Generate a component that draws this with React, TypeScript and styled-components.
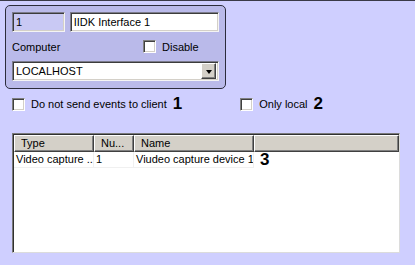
import React from 'react';
import styled, { createGlobalStyle } from 'styled-components';

const GlobalStyle = createGlobalStyle`
  html, body {
    margin: 0;
    padding: 0;
    background: #cfcfff;
  }
  body {
    font-family: "Liberation Sans", Arial, sans-serif;
    font-size: 11px;
    color: #000;
  }
`;

const Window = styled.div`
  width: 415px;
  height: 265px;
  box-sizing: border-box;
  background: #cfcfff;
  border-top: 1px solid #3a3a48;
  padding: 4px 0 0 5px;
  display: flex;
  flex-direction: column;
`;

const Panel = styled.div`
  width: 221px;
  height: 84px;
  box-sizing: border-box;
  background: #babaea;
  border: 1px solid #2c2c3c;
  border-radius: 5px;
  padding: 6px 6px 0 6px;
  display: flex;
  flex-direction: column;
`;

const Row = styled.div<{ $h?: number }>`
  display: flex;
  align-items: center;
  gap: 5px;
  height: ${(p) => (p.$h ? `${p.$h}px` : 'auto')};
`;

const Field = styled.div<{ $w: number; $bg?: string }>`
  width: ${(p) => p.$w}px;
  height: 20px;
  box-sizing: border-box;
  background: ${(p) => p.$bg || '#fff'};
  border: 1px solid;
  border-color: #7c7c8c #f4f4f4 #f4f4f4 #7c7c8c;
  box-shadow: inset 1px 1px 0 #3c3c3c, inset -1px -1px 0 #d4d0c8;
  padding: 0 0 0 3px;
  display: flex;
  align-items: center;
  white-space: nowrap;
  overflow: hidden;
`;

const Label = styled.span`
  flex: 1;
`;

const CheckWrap = styled.label<{ $w?: number }>`
  display: flex;
  align-items: center;
  gap: 6px;
  width: ${(p) => (p.$w ? `${p.$w}px` : 'auto')};
`;

const Box = styled.span`
  width: 13px;
  height: 13px;
  box-sizing: border-box;
  background: #fff;
  border: 1px solid;
  border-color: #808080 #fff #fff #808080;
  box-shadow: inset 1px 1px 0 #404040, inset -1px -1px 0 #d4d0c8;
`;

const Combo = styled(Field)`
  padding-right: 2px;
  justify-content: space-between;
`;

const DropBtn = styled.span`
  width: 15px;
  height: 16px;
  box-sizing: border-box;
  background: #d4d0c8;
  border: 1px solid;
  border-color: #fff #404040 #404040 #fff;
  box-shadow: inset -1px -1px 0 #808080;
  display: flex;
  align-items: center;
  justify-content: center;

  &::after {
    content: '';
    border-left: 3.5px solid transparent;
    border-right: 3.5px solid transparent;
    border-top: 4px solid #000;
    margin-top: 1px;
  }
`;

const Options = styled.div`
  display: flex;
  align-items: center;
  margin: 8px 0 0 7px;
  height: 14px;
`;

const Spacer = styled.div<{ $w: number }>`
  width: ${(p) => p.$w}px;
`;

const Marker = styled.span`
  font-family: "Liberation Sans", Arial, sans-serif;
  font-weight: bold;
  font-size: 17px;
  line-height: 14px;
  margin-left: 6px;
`;

const List = styled.div`
  margin: 22px 0 0 7px;
  width: 388px;
  height: 120px;
  box-sizing: border-box;
  background: #fff;
  border: 1px solid;
  border-color: #7a7a7a #dcdcdc #dcdcdc #7a7a7a;
  box-shadow: inset 1px 1px 0 #303030;
  padding: 1px 0 0 1px;
  display: flex;
  flex-direction: column;
`;

const Header = styled.div`
  display: flex;
  height: 17px;
  background: #d4d0c8;
`;

const HeadCell = styled.div<{ $w?: number }>`
  width: ${(p) => (p.$w ? `${p.$w}px` : 'auto')};
  flex: ${(p) => (p.$w ? 'none' : '1')};
  box-sizing: border-box;
  border: 1px solid;
  border-color: #fff #404040 #404040 #fff;
  box-shadow: inset -1px -1px 0 #808080;
  padding: 1px 0 0 6px;
  white-space: nowrap;
  overflow: hidden;
`;

const DataRow = styled.div`
  display: flex;
  height: 16px;
  align-items: center;
`;

const Cell = styled.div<{ $w: number }>`
  width: ${(p) => p.$w}px;
  box-sizing: border-box;
  padding-left: 2px;
  white-space: nowrap;
  overflow: hidden;
  height: 16px;
  line-height: 15px;
  border-right: 1px solid #f0f0f0;
  border-bottom: 1px solid #f0f0f0;
`;

const columns = [
  { title: 'Type', width: 80 },
  { title: 'Nu...', width: 40 },
  { title: 'Name', width: 120 },
];

const App: React.FC = () => (
  <>
    <GlobalStyle />
    <Window>
      <Panel>
        <Row>
          <Field $w={53} $bg='#c9c9f4'>1</Field>
          <Field $w={150}>IIDK Interface 1</Field>
        </Row>
        <Row $h={29}>
          <Label>Computer</Label>
          <CheckWrap $w={76}>
            <Box />
            Disable
          </CheckWrap>
        </Row>
        <Combo $w={207}>
          LOCALHOST
          <DropBtn />
        </Combo>
      </Panel>

      <Options>
        <CheckWrap>
          <Box />
          Do not send events to client
        </CheckWrap>
        <Marker>1</Marker>
        <Spacer $w={58} />
        <CheckWrap>
          <Box />
          Only local
        </CheckWrap>
        <Marker>2</Marker>
      </Options>

      <List>
        <Header>
          {columns.map((c) => (
            <HeadCell key={c.title} $w={c.width}>{c.title}</HeadCell>
          ))}
          <HeadCell />
        </Header>
        <DataRow>
          <Cell $w={80}>Video capture ..</Cell>
          <Cell $w={40}>1</Cell>
          <Cell $w={120}>Viudeo capture device 1</Cell>
          <Marker>3</Marker>
        </DataRow>
      </List>
    </Window>
  </>
);

export default App;
